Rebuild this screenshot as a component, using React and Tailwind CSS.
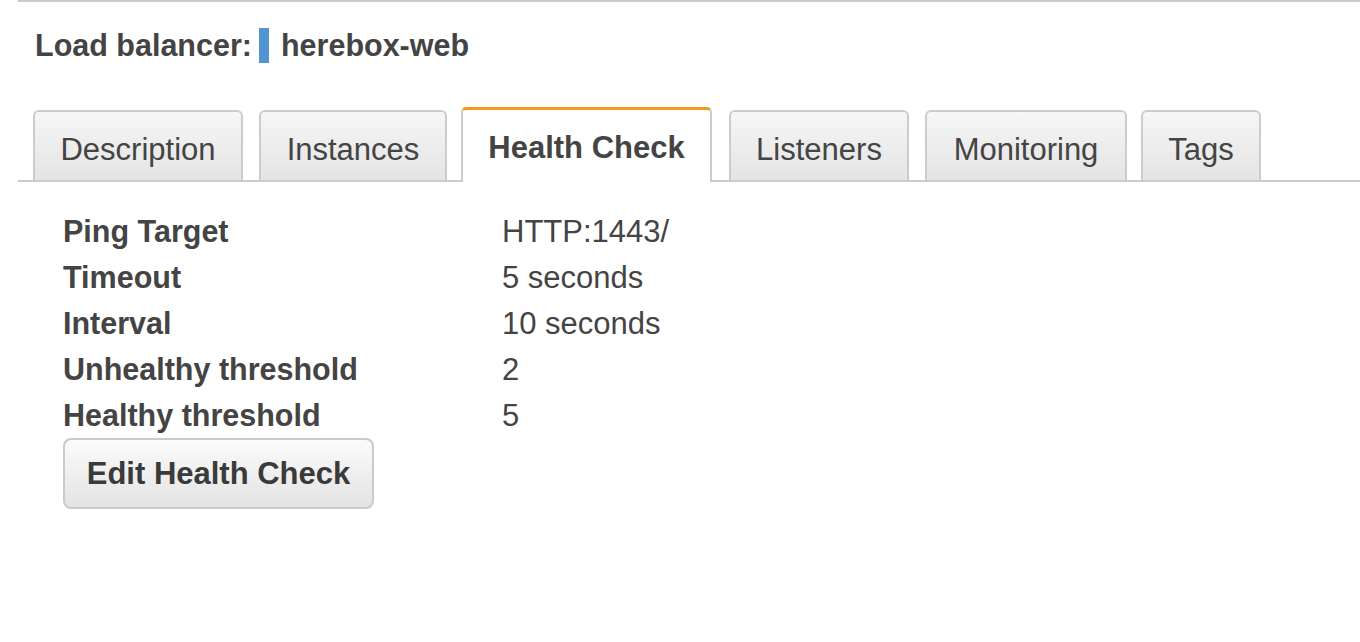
import React from "react";

const tabs = [
  { label: "Description", w: "w-[210px]", ml: "ml-[15px]" },
  { label: "Instances", w: "w-[188px]", ml: "ml-[16px]" },
  { label: "Health Check", w: "w-[251px]", ml: "ml-[14px]", active: true },
  { label: "Listeners", w: "w-[180px]", ml: "ml-[17px]" },
  { label: "Monitoring", w: "w-[202px]", ml: "ml-[16px]" },
  { label: "Tags", w: "w-[120px]", ml: "ml-[14px]" },
];

const rows = [
  ["Ping Target", "HTTP:1443/"],
  ["Timeout", "5 seconds"],
  ["Interval", "10 seconds"],
  ["Unhealthy threshold", "2"],
  ["Healthy threshold", "5"],
];

export default function App() {
  return (
    <div
      className="w-[1360px] h-[642px] bg-white text-[#444] overflow-hidden"
      style={{ fontFamily: '"Liberation Sans", Arial, Helvetica, sans-serif' }}
    >
      <div className="ml-[18px] border-t-2 border-[#cccccc]">
        <div className="h-[105px] pt-[25px] pl-[17px] flex items-start">
          <div className="flex items-center h-[36px] text-[30.5px] font-bold leading-[36px]">
            <span>Load balancer:</span>
            <span className="ml-[7px] inline-block w-[10px] h-[35px] bg-[#5294d0]" />
            <span className="ml-[12px]">herebox-web</span>
          </div>
        </div>

        <div className="flex items-end border-b-2 border-[#cccccc]">
          {tabs.map((t) =>
            t.active ? (
              <div
                key={t.label}
                className={`${t.w} ${t.ml} h-[75px] -mb-[2px] bg-white border-x-2 border-[#cccccc] border-t-[3px] border-t-[#f7981d] rounded-t-[5px] flex items-center justify-center text-[31px] font-bold leading-none pt-[3px]`}
              >
                {t.label}
              </div>
            ) : (
              <div
                key={t.label}
                className={`${t.w} ${t.ml} h-[70px] border-2 border-b-0 border-[#cccccc] rounded-t-[6px] bg-gradient-to-b from-[#f6f6f6] to-[#e4e4e4] flex items-center justify-center text-[31px] leading-none pt-[6px]`}
              >
                {t.label}
              </div>
            )
          )}
        </div>

        <div className="pt-[26px] pl-[45px]">
          {rows.map(([k, v]) => (
            <div key={k} className="flex items-center h-[46px] leading-none">
              <div className="w-[439px] font-bold text-[30.5px]">{k}</div>
              <div className="text-[31px]">{v}</div>
            </div>
          ))}
          <button className="mt-0 w-[311px] h-[71px] rounded-[8px] border-2 border-[#cacaca] bg-gradient-to-b from-[#fbfbfb] to-[#e3e3e3] text-[31px] font-bold text-[#3a3a3a] leading-none flex items-center justify-center">
            Edit Health Check
          </button>
        </div>
      </div>
    </div>
  );
}
